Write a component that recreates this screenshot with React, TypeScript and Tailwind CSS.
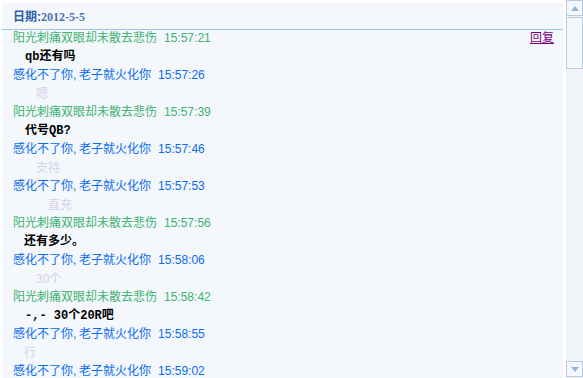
import React from "react";

type Entry =
  | { kind: "name"; who: "g" | "b"; time: string; reply?: boolean }
  | { kind: "bold"; text: string; indent: number }
  | { kind: "light"; text: string; indent: number };

const rows: Entry[] = [
  { kind: "name", who: "g", time: "15:57:21", reply: true },
  { kind: "bold", text: "qb还有吗", indent: 23 },
  { kind: "name", who: "b", time: "15:57:26" },
  { kind: "light", text: "嗯", indent: 34 },
  { kind: "name", who: "g", time: "15:57:39" },
  { kind: "bold", text: "代号QB?", indent: 23 },
  { kind: "name", who: "b", time: "15:57:46" },
  { kind: "light", text: "支持", indent: 34 },
  { kind: "name", who: "b", time: "15:57:53" },
  { kind: "light", text: "直充", indent: 46 },
  { kind: "name", who: "g", time: "15:57:56" },
  { kind: "bold", text: "还有多少。", indent: 22 },
  { kind: "name", who: "b", time: "15:58:06" },
  { kind: "light", text: "30个", indent: 34 },
  { kind: "name", who: "g", time: "15:58:42" },
  { kind: "bold", text: "-,- 30个20R吧", indent: 23 },
  { kind: "name", who: "b", time: "15:58:55" },
  { kind: "light", text: "行", indent: 22 },
  { kind: "name", who: "b", time: "15:59:02" },
];

const sans = { fontFamily: "'Liberation Sans', 'Noto Sans CJK SC', sans-serif" };
const serif = { fontFamily: "'Liberation Serif', 'Noto Sans CJK SC', serif" };
const mono = { fontFamily: "'Liberation Mono', 'Noto Sans CJK SC', monospace" };

function Row({ e }: { e: Entry }) {
  if (e.kind === "name") {
    const color = e.who === "g" ? "text-[#3cb371]" : "text-[#0a6cf0]";
    return (
      <div className="h-[18.5px] flex items-start pl-[11px] pr-[9px]">
        <div className={`text-[12px] leading-[14px] whitespace-pre ${color}`} style={sans}>
          {e.who === "g" ? (
            "阳光刺痛双眼却未散去悲伤"
          ) : (
            <>
              感化不了你<span className="inline-block w-[6px]">,</span>老子就火化你
            </>
          )}
          <span className="ml-[7px]">{e.time}</span>
        </div>
        {e.reply && (
          <a
            href="#"
            className="ml-auto text-[12px] leading-[14px] text-[#800080] underline"
            style={sans}
          >
            回复
          </a>
        )}
      </div>
    );
  }
  if (e.kind === "bold") {
    return (
      <div
        className="h-[18.5px] text-[12px] leading-[14px] font-bold text-black whitespace-pre"
        style={{ ...mono, paddingLeft: e.indent }}
      >
        {e.text}
      </div>
    );
  }
  return (
    <div
      className="h-[18.5px] text-[12px] leading-[14px] text-[#d6d0ee] whitespace-pre"
      style={{ ...sans, paddingLeft: e.indent }}
    >
      {e.text}
    </div>
  );
}

export default function App() {
  return (
    <div className="w-[583px] h-[378px] bg-white flex overflow-hidden">
      <div className="w-[563px] h-full pl-[2px] pt-[3px]">
        <div className="h-full bg-[#f4f7fb] flex flex-col">
          <div className="h-[27px] shrink-0 border-b border-[#9fc3e4] flex items-center pl-[11px] pt-[1px]">
            <span className="text-[12px] leading-[14px] font-bold text-[#2e5ea8]" style={sans}>
              日期:
            </span>
            <span className="text-[12px] leading-[14px] font-bold text-[#4b70b2]" style={serif}>
              2012-5-5
            </span>
          </div>
          <div className="flex flex-col pt-[1px]">
            {rows.map((e, i) => (
              <Row key={i} e={e} />
            ))}
          </div>
        </div>
      </div>
      <div className="w-[3px]" />
      <div className="w-[17px] h-full bg-[#f0f3f8] flex flex-col">
        <div className="h-[16px] border border-[#b9c9e0] bg-[#f4f7fb] flex items-center justify-center">
          <svg width="8" height="5" viewBox="0 0 8 5">
            <path d="M0 5 L4 0 L8 5 Z" fill="#8fb6de" />
          </svg>
        </div>
        <div className="mt-[1px] h-[52px] border border-[#b9c9e0] bg-[#f4f7fb]" />
        <div className="flex-1" />
        <div className="h-[16px] border border-[#b9c9e0] bg-[#f4f7fb] flex items-center justify-center mb-[1px]">
          <svg width="8" height="5" viewBox="0 0 8 5">
            <path d="M0 0 L8 0 L4 5 Z" fill="#8fb6de" />
          </svg>
        </div>
      </div>
    </div>
  );
}
